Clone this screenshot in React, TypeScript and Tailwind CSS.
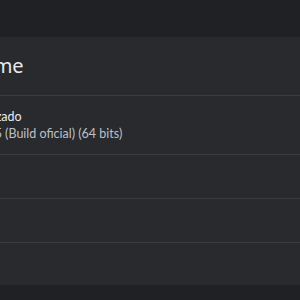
export default function App() {
  return (
    <div className="min-h-screen overflow-hidden bg-[#202124] pt-[37px] font-['Noto_Sans',sans-serif]">
      <div className="-ml-[200px] w-[640px] bg-[#292a2d] text-[#e8eaed]">
        <div className="flex h-[58px] items-center gap-4 px-5">
          <span className="h-10 w-10 rounded-full bg-[#8ab4f8]" />
          <h1 className="text-[20px]">Google Chrome</h1>
        </div>
        <div className="flex h-[59px] items-center gap-10 border-t border-[#3c3d40] px-5 font-['Lato',sans-serif]">
          <span className="h-5 w-5 rounded-full bg-[#8ab4f8]" />
          <div className="text-[12.5px] leading-[17px]">
            <div>O Chrome está atualizado</div>
            <div className="text-[#bdc1c6]">Versão 107.0.5304.65 (Build oficial) (64 bits)</div>
          </div>
        </div>
        <div className="flex h-[44px] items-center border-t border-[#3c3d40] px-3 text-[13px]">Receber ajuda com o Chrome</div>
        <div className="flex h-[44px] items-center border-t border-[#3c3d40] px-3 text-[13px]">Informar um problema</div>
        <div className="flex h-[43px] items-center border-t border-[#3c3d40] px-3 text-[13px]">Política de Privacidade</div>
      </div>
    </div>
  );
}
